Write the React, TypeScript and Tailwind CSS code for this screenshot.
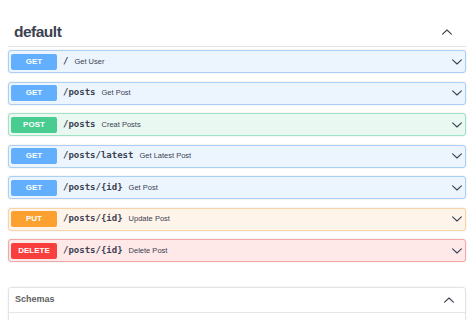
import React from "react";

type Op = { method: string; path: string; summary: string; badge: string; bg: string; border: string };

const ops: Op[] = [
  { method: "GET", path: "/", summary: "Get User", badge: "bg-[#61affe]", bg: "bg-[#ecf5fe]", border: "border-[#a9cff5]" },
  { method: "GET", path: "/posts", summary: "Get Post", badge: "bg-[#61affe]", bg: "bg-[#ecf5fe]", border: "border-[#a9cff5]" },
  { method: "POST", path: "/posts", summary: "Creat Posts", badge: "bg-[#49cc90]", bg: "bg-[#e9f8f1]", border: "border-[#a0e3c4]" },
  { method: "GET", path: "/posts/latest", summary: "Get Latest Post", badge: "bg-[#61affe]", bg: "bg-[#ecf5fe]", border: "border-[#a9cff5]" },
  { method: "GET", path: "/posts/{id}", summary: "Get Post", badge: "bg-[#61affe]", bg: "bg-[#ecf5fe]", border: "border-[#a9cff5]" },
  { method: "PUT", path: "/posts/{id}", summary: "Update Post", badge: "bg-[#fca130]", bg: "bg-[#fff4ea]", border: "border-[#f8d3a6]" },
  { method: "DELETE", path: "/posts/{id}", summary: "Delete Post", badge: "bg-[#f93e3e]", bg: "bg-[#fee8e8]", border: "border-[#f2a7a7]" },
];

function ChevronDown() {
  return (
    <svg width="10" height="6" viewBox="0 0 10 6" fill="none">
      <path d="M0.6 0.8 L5 5 L9.4 0.8" stroke="#3b4151" strokeWidth="1.1" strokeLinecap="round" strokeLinejoin="round" />
    </svg>
  );
}

function ChevronUp() {
  return (
    <svg width="10" height="6" viewBox="0 0 10 6" fill="none">
      <path d="M0.6 5.2 L5 1 L9.4 5.2" stroke="#3b4151" strokeWidth="1.1" strokeLinecap="round" strokeLinejoin="round" />
    </svg>
  );
}

export default function App() {
  return (
    <div className="w-[474px] h-[320px] overflow-hidden bg-white px-2 text-[#3b4151] font-['Liberation_Sans',Arial,sans-serif]">
      <div className="mt-[18px] h-[29px] flex items-center justify-between border-b border-[#e1e3e6] pl-[6px] pr-[14px]">
        <span className="text-[15.5px] font-bold tracking-[-0.5px]">default</span>
        <ChevronUp />
      </div>
      <div className="mt-[3px] flex flex-col gap-[8.5px]">
        {ops.map((op, i) => (
          <div
            key={i}
            className={`h-[23px] rounded-[3px] border ${op.bg} ${op.border} shadow-[0_0_2px_rgba(0,0,0,0.12)] flex items-center pl-[2px] pr-[3px]`}
          >
            <div className={`w-[46px] h-[16px] rounded-[2px] ${op.badge} text-white text-[8px] font-bold flex items-center justify-center`}>
              {op.method}
            </div>
            <span className="ml-[6px] text-[9px] font-bold font-['DejaVu_Sans_Mono',monospace]">{op.path}</span>
            <span className="ml-[6px] text-[7.5px] text-[#3b4151]">{op.summary}</span>
            <div className="ml-auto flex items-center">
              <ChevronDown />
            </div>
          </div>
        ))}
      </div>
      <div className="mt-[25px] rounded-[3px] border border-[#e3e3e3] shadow-[0_0_2px_rgba(0,0,0,0.08)]">
        <div className="h-[25px] flex items-center justify-between border-b border-[#e6e6e6] pl-[6px] pr-[11px]">
          <span className="text-[9px] font-bold text-[#606060]">Schemas</span>
          <ChevronUp />
        </div>
        <div className="h-[20px]" />
      </div>
    </div>
  );
}
